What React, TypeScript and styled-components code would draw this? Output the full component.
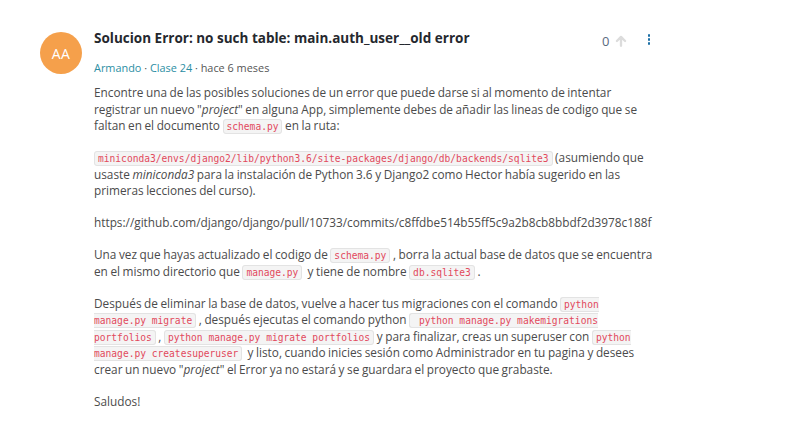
import React from "react";
import styled, { createGlobalStyle } from "styled-components";

const Global = createGlobalStyle`
  html, body { margin: 0; padding: 0; background: #fff; }
  body { font-family: "Open Sans", "Noto Sans", sans-serif; }
`;

const Page = styled.div`
  width: 806px;
  height: 428px;
  box-sizing: border-box;
  padding: 24px 0 0 40px;
  background: #fff;
  overflow: hidden;
`;

const Comment = styled.div`
  display: flex;
  align-items: flex-start;
  gap: 12px;
`;

const Avatar = styled.div`
  flex: none;
  margin-top: 8px;
  width: 42px;
  height: 42px;
  border-radius: 50%;
  background: #f5a04b;
  color: #fff;
  display: flex;
  align-items: center;
  justify-content: center;
  font-size: 14px;
  letter-spacing: 0.5px;
`;

const Main = styled.div`
  flex: none;
  width: 566px;
`;

const Header = styled.div`
  display: flex;
  justify-content: space-between;
  align-items: flex-start;
  padding-right: 10px;
`;

const Title = styled.h2`
  margin: 4px 0 0;
  font-size: 13.5px;
  line-height: 20px;
  font-weight: 700;
  color: #25282e;
`;

const Meta = styled.div`
  margin-top: 13px;
  font-size: 10.9px;
  line-height: 14px;
  color: #555;
`;

const MetaLink = styled.span`
  color: #2b8ea3;
`;

const Body = styled.div`
  margin-top: 9px;
  font-size: 11.8px;
  word-spacing: -0.5px;
  line-height: 16.5px;
  color: #4b4b4b;
`;

const P = styled.p`
  margin: 0 0 15.5px;
`;

const Code = styled.code`
  font-family: "DejaVu Sans Mono", "Liberation Mono", monospace;
  font-size: 9.6px;
  line-height: 1;
  word-spacing: 0;
  color: #e2495c;
  background: #f4f4f4;
  border: 1px solid #e3e3e3;
  border-radius: 3px;
  padding: 1px 3px;
`;

const Side = styled.div`
  flex: none;
  display: flex;
  align-items: center;
  margin-top: 8px;
  gap: 4px;
`;

const Count = styled.span`
  font-size: 13px;
  color: #5a6a80;
`;

const Kebab = styled.div`
  margin: 0 0 3px 16px;
  display: flex;
  flex-direction: column;
  gap: 1.5px;
  & > span {
    width: 2.5px;
    height: 2.5px;
    background: #1c6fa6;
    border-radius: 1px;
  }
`;

export default function App() {
  return (
    <Page>
      <Global />
      <Comment>
        <Avatar>AA</Avatar>
        <Main>
          <Header>
            <div>
              <Title>Solucion Error: no such table: main.auth_user__old error</Title>
              <Meta>
                <MetaLink>Armando</MetaLink> · <MetaLink>Clase 24</MetaLink> · hace 6 meses
              </Meta>
            </div>
            <Side>
              <Count>0</Count>
              <svg width="14" height="14" viewBox="0 0 24 24" fill="none" stroke="#dcdcdc" strokeWidth="4" strokeLinecap="round" strokeLinejoin="round">
                <path d="M12 20V5M5 12l7-7 7 7" />
              </svg>
              <Kebab><span /><span /><span /></Kebab>
            </Side>
          </Header>
          <Body>
            <P>
              Encontre una de las posibles soluciones de un error que puede darse si al momento de intentar
              registrar un nuevo "<em>project</em>" en alguna App, simplemente debes de añadir las lineas de codigo que se
              faltan en el documento <Code>schema.py</Code> en la ruta:
            </P>
            <P>
              <Code>miniconda3/envs/django2/lib/python3.6/site-packages/django/db/backends/sqlite3</Code> (asumiendo que
              usaste <em>miniconda3</em> para la instalación de Python 3.6 y Django2 como Hector había sugerido en las
              primeras lecciones del curso).
            </P>
            <P>https://github.com/django/django/pull/10733/commits/c8ffdbe514b55ff5c9a2b8cb8bbdf2d3978c188f</P>
            <P>
              Una vez que hayas actualizado el codigo de <Code>schema.py</Code> , borra la actual base de datos que se encuentra
              en el mismo directorio que <Code>manage.py</Code>{"\u00a0"} y tiene de nombre <Code>db.sqlite3</Code> .
            </P>
            <P>
              Después de eliminar la base de datos, vuelve a hacer tus migraciones con el comando <Code>python<br />manage.py migrate</Code> , después ejecutas el comando python <Code>{"\u00a0"}python manage.py makemigrations<br />portfolios</Code> , <Code>python manage.py migrate portfolios</Code> y para finalizar, creas un superuser con <Code>python<br />manage.py createsuperuser</Code>{"\u00a0"} y listo, cuando inicies sesión como Administrador en tu pagina y desees<br />
              crear un nuevo "<em>project</em>" el Error ya no estará y se guardara el proyecto que grabaste.
            </P>
            <P>Saludos!</P>
          </Body>
        </Main>
      </Comment>
    </Page>
  );
}
